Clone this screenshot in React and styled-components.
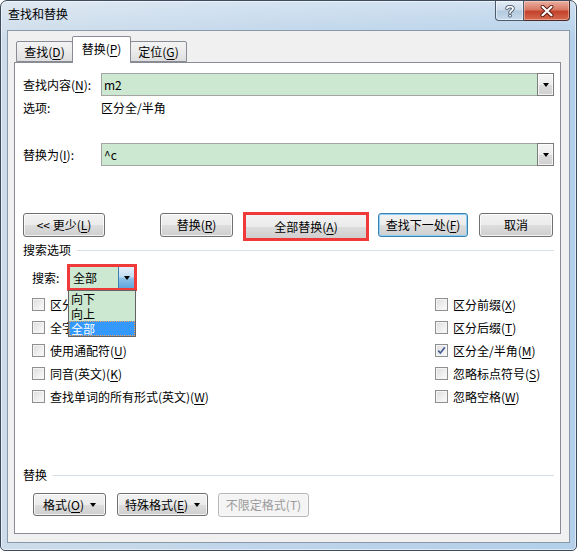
import React from "react";
import styled, { createGlobalStyle } from "styled-components";

const GlobalStyle = createGlobalStyle`
  html, body { margin: 0; padding: 0; background: #ffffff; }
  body {
    font-family: "Noto Sans CJK SC", "Microsoft YaHei", sans-serif;
    font-size: 12px;
    color: #000;
  }
  * { box-sizing: border-box; }
  u { text-underline-offset: 2px; }
`;

const Window = styled.div`
  width: 577px;
  height: 551px;
  border: 1px solid #3d4b5c;
  border-radius: 7px 7px 5px 5px;
  background:
    linear-gradient(180deg, rgba(255,255,255,0.35) 0, rgba(255,255,255,0) 40px),
    linear-gradient(90deg, #cddcea 0%, #bfd5ea 45%, #b3cfe9 100%);
  display: flex;
  flex-direction: column;
  overflow: hidden;
  box-shadow: inset 0 0 0 1px rgba(255,255,255,0.55);
`;

const TitleBar = styled.div`
  height: 29px;
  display: flex;
  align-items: flex-start;
  flex-shrink: 0;
`;

const Title = styled.div`
  padding-left: 7px;
  line-height: 26px;
  font-size: 12px;
  color: #000;
`;

const Caption = styled.div`
  margin-left: auto;
  margin-right: 6px;
  display: flex;
`;

const HelpButton = styled.div`
  width: 29px;
  height: 20px;
  border: 1px solid #4e5b6b;
  border-top: none;
  border-radius: 0 0 0 4px;
  background: linear-gradient(#e3ecf5 0%, #cbdaea 48%, #b4c9de 52%, #c8dbed 100%);
  box-shadow: inset 0 0 0 1px rgba(255,255,255,0.5);
  display: flex;
  align-items: center;
  justify-content: center;
`;

const CloseButton = styled.div`
  width: 46px;
  height: 20px;
  border: 1px solid #4b2a27;
  border-left: none;
  border-top: none;
  border-radius: 0 0 4px 0;
  background: linear-gradient(#eab0a3 0%, #d97a65 45%, #c4432c 55%, #d5694f 100%);
  box-shadow: inset 0 0 0 1px rgba(255,220,210,0.45);
  display: flex;
  align-items: center;
  justify-content: center;
`;

const Client = styled.div`
  flex: 1;
  margin: 0 6px 7px 6px;
  border: 1px solid #8a99a9;
  background: #f0f0f0;
  padding: 5px 8px 8px 6px;
  display: flex;
  flex-direction: column;
  min-height: 0;
`;

const TabRow = styled.div`
  height: 26px;
  display: flex;
  align-items: flex-end;
  padding-left: 2px;
  flex-shrink: 0;
`;

const Tab = styled.div`
  position: relative;
  width: ${(p) => (p.$active ? 59 : 57)}px;
  height: ${(p) => (p.$active ? 27 : 21)}px;
  margin-left: ${(p) => (p.$first ? 0 : -1)}px;
  margin-bottom: ${(p) => (p.$active ? -1 : 0)}px;
  z-index: ${(p) => (p.$active ? 2 : 1)};
  border: 1px solid #898c95;
  border-bottom: ${(p) => (p.$active ? "none" : "1px solid #898c95")};
  border-radius: 2px 2px 0 0;
  background: ${(p) =>
    p.$active ? "#ffffff" : "linear-gradient(#f3f3f3 0%, #ebebeb 50%, #dedede 100%)"};
  display: flex;
  align-items: center;
  justify-content: center;
  padding-bottom: ${(p) => (p.$active ? 2 : 0)}px;
  line-height: 16px;
`;

const Panel = styled.div`
  flex: 1;
  border: 1px solid #898c95;
  background: #ffffff;
  padding: 10px 6px 16px 8px;
  display: flex;
  flex-direction: column;
  min-height: 0;
`;

const FieldRow = styled.div`
  display: flex;
  align-items: center;
  height: 23px;
  margin-top: ${(p) => p.$mt || 0}px;
`;

const FieldLabel = styled.div`
  width: 78px;
  line-height: 16px;
  flex-shrink: 0;
`;

const TextRow = styled.div`
  display: flex;
  line-height: 16px;
  margin-top: ${(p) => p.$mt || 0}px;
`;

const ComboInput = styled.div`
  flex: 1;
  height: 23px;
  border: 1px solid #a5a5a5;
  background: #cde8d0;
  display: flex;
  align-items: center;
  padding-left: 2px;
`;

const ComboValue = styled.div`
  flex: 1;
  line-height: 16px;
`;

const DropButton = styled.div`
  width: 17px;
  height: 23px;
  margin-right: -1px;
  border: 1px solid #7c7c7c;
  background: linear-gradient(#f6f6f6 0%, #ececec 50%, #dcdcdc 51%, #d0d0d0 100%);
  box-shadow: inset 0 0 0 1px rgba(255,255,255,0.7);
  display: flex;
  align-items: center;
  justify-content: center;
`;

const Triangle = styled.span`
  display: inline-block;
  width: 0;
  height: 0;
  border-left: 3.5px solid transparent;
  border-right: 3.5px solid transparent;
  border-top: 4px solid #000;
`;

const ButtonRow = styled.div`
  display: flex;
  align-items: flex-start;
  margin-top: ${(p) => p.$mt || 0}px;
  padding-left: ${(p) => p.$pl || 0}px;
`;

const Button = styled.button`
  width: ${(p) => p.$w}px;
  height: ${(p) => p.$h || 24}px;
  margin-left: ${(p) => p.$ml || 0}px;
  padding: 0;
  font: inherit;
  font-size: 12px;
  line-height: 16px;
  color: ${(p) => (p.disabled ? "#9a9a9a" : "#000")};
  border: 1px solid ${(p) => (p.disabled ? "#b5b8ba" : p.$focus ? "#3c7fb1" : "#707070")};
  border-radius: 3px;
  background: ${(p) =>
    p.disabled
      ? "#f4f4f4"
      : "linear-gradient(#f2f2f2 0%, #ebebeb 50%, #dddddd 51%, #cfcfcf 100%)"};
  box-shadow: inset 0 0 0 1px
    ${(p) => (p.disabled ? "#f8f8f8" : p.$focus ? "#8fd0f5" : "rgba(255,255,255,0.75)")};
  display: flex;
  align-items: center;
  justify-content: center;
  gap: 6px;
  flex-shrink: 0;
`;

const HighlightBox = styled.div`
  width: ${(p) => p.$w}px;
  height: ${(p) => p.$h}px;
  margin-left: ${(p) => p.$ml || 0}px;
  margin-top: -1px;
  margin-bottom: -4px;
  border: 3px solid #f03a3a;
  display: flex;
  flex-shrink: 0;
`;

const InnerButton = styled.div`
  flex: 1;
  line-height: 16px;
  background: linear-gradient(#f2f2f2 0%, #ebebeb 50%, #dddddd 51%, #cfcfcf 100%);
  display: flex;
  align-items: center;
  justify-content: center;
`;

const SectionTitle = styled.div`
  display: flex;
  align-items: center;
  gap: 6px;
  line-height: 16px;
  margin-top: ${(p) => p.$mt || 0}px;
  &::after {
    content: "";
    flex: 1;
    height: 1px;
    margin-top: 1px;
    background: #d5dfe5;
  }
`;

const SearchRow = styled.div`
  display: flex;
  align-items: center;
  margin-top: 6px;
  padding-left: 9px;
  line-height: 16px;
`;

const SearchLabel = styled.div`
  width: 35px;
`;

const SearchCombo = styled.div`
  position: relative;
  width: 70px;
  height: 27px;
  border: 3px solid #f03a3a;
  background: #cde8d0;
  display: flex;
  align-items: center;
`;

const SearchValue = styled.div`
  flex: 1;
  padding-left: 3px;
`;

const BlueArrow = styled.div`
  width: 16px;
  height: 21px;
  border-left: 1px solid #3c7fb1;
  background: linear-gradient(#e4f0fa 0%, #c4def3 45%, #8ec1e9 55%, #5fa6dc 100%);
  display: flex;
  align-items: center;
  justify-content: center;
`;

const DropList = styled.div`
  position: absolute;
  left: -2px;
  top: 23px;
  width: 68px;
  border: 1px solid #646464;
  background: #cde8d0;
  z-index: 5;
`;

const DropItem = styled.div`
  height: 15px;
  line-height: 15px;
  padding-left: 2px;
  color: ${(p) => (p.$selected ? "#fff" : "#000")};
  background: ${(p) => (p.$selected ? "#3399ff" : "transparent")};
  outline: ${(p) => (p.$selected ? "1px dotted #f0a060" : "none")};
  outline-offset: -1px;
`;

const OptionGrid = styled.div`
  display: grid;
  grid-template-columns: 403px 1fr;
  grid-auto-rows: 23px;
  margin-top: 2px;
  padding-left: 9px;
`;

const Option = styled.label`
  display: flex;
  align-items: center;
  gap: 5px;
  line-height: 16px;
  white-space: nowrap;
`;

const CheckBox = styled.span`
  width: 13px;
  height: 13px;
  flex-shrink: 0;
  border: 1px solid #8e8f8f;
  background: linear-gradient(135deg, #dcdcdc 0%, #f0f0f0 60%, #fbfbfb 100%);
  box-shadow: inset 0 0 0 1px #f4f4f4;
  display: flex;
  align-items: center;
  justify-content: center;
`;

const BottomSection = styled.div`
  margin-top: auto;
`;

const ArrowDown = () => <Triangle />;

const CheckMark = () => (
  <svg width="9" height="9" viewBox="0 0 9 9">
    <path d="M1.2 4.6 L3.4 7 L7.8 1.4" fill="none" stroke="#4a5f97" strokeWidth="1.7" />
  </svg>
);

const Check = ({ checked }) => <CheckBox>{checked ? <CheckMark /> : null}</CheckBox>;

const HelpIcon = () => (
  <svg width="12" height="14" viewBox="0 0 12 14">
    <path
      d="M3 4.5 C3 2 9 2 9 4.6 C9 6.6 6 6.6 6 8.8"
      fill="none"
      stroke="#3b4a5c"
      strokeWidth="3.4"
      strokeLinecap="round"
    />
    <circle cx="6" cy="11.8" r="1.8" fill="#3b4a5c" />
    <path
      d="M3 4.5 C3 2 9 2 9 4.6 C9 6.6 6 6.6 6 8.8"
      fill="none"
      stroke="#ffffff"
      strokeWidth="1.8"
      strokeLinecap="round"
    />
    <circle cx="6" cy="11.8" r="1" fill="#ffffff" />
  </svg>
);

const CloseIcon = () => (
  <svg width="14" height="12" viewBox="0 0 14 12">
    <path d="M2.5 1.8 L11.5 10.2 M11.5 1.8 L2.5 10.2" stroke="#5a1e16" strokeWidth="4" strokeLinecap="round" />
    <path d="M2.5 1.8 L11.5 10.2 M11.5 1.8 L2.5 10.2" stroke="#ffffff" strokeWidth="2.2" strokeLinecap="round" />
  </svg>
);

const leftOptions = [
  ["区分大小写(", "H", ")", false],
  ["全字匹配(", "Y", ")", false],
  ["使用通配符(", "U", ")", false],
  ["同音(英文)(", "K", ")", false],
  ["查找单词的所有形式(英文)(", "W", ")", false],
];

const rightOptions = [
  ["区分前缀(", "X", ")", false],
  ["区分后缀(", "T", ")", false],
  ["区分全/半角(", "M", ")", true],
  ["忽略标点符号(", "S", ")", false],
  ["忽略空格(", "W", ")", false],
];

export default function App() {
  const rows = leftOptions.map((l, i) => [l, rightOptions[i]]);
  return (
    <>
      <GlobalStyle />
      <Window>
        <TitleBar>
          <Title>查找和替换</Title>
          <Caption>
            <HelpButton>
              <HelpIcon />
            </HelpButton>
            <CloseButton>
              <CloseIcon />
            </CloseButton>
          </Caption>
        </TitleBar>
        <Client>
          <TabRow>
            <Tab $first>
              查找(<u>D</u>)
            </Tab>
            <Tab $active>
              替换(<u>P</u>)
            </Tab>
            <Tab>
              定位(<u>G</u>)
            </Tab>
          </TabRow>
          <Panel>
            <FieldRow>
              <FieldLabel>
                查找内容(<u>N</u>):
              </FieldLabel>
              <ComboInput>
                <ComboValue>m2</ComboValue>
                <DropButton>
                  <ArrowDown />
                </DropButton>
              </ComboInput>
            </FieldRow>
            <TextRow $mt={4}>
              <FieldLabel>选项:</FieldLabel>
              <div>区分全/半角</div>
            </TextRow>
            <FieldRow $mt={27}>
              <FieldLabel>
                替换为(<u>I</u>):
              </FieldLabel>
              <ComboInput>
                <ComboValue>^c</ComboValue>
                <DropButton>
                  <ArrowDown />
                </DropButton>
              </ComboInput>
            </FieldRow>

            <ButtonRow $mt={47}>
              <Button $w={82}>
                <span>
                  {"<< 更少("}
                  <u>L</u>)
                </span>
              </Button>
              <Button $w={73} $ml={55}>
                <span>
                  替换(<u>R</u>)
                </span>
              </Button>
              <HighlightBox $w={126} $h={29} $ml={10}>
                <InnerButton>
                  <span>
                    全部替换(<u>A</u>)
                  </span>
                </InnerButton>
              </HighlightBox>
              <Button $w={90} $ml={9} $focus>
                <span>
                  查找下一处(<u>F</u>)
                </span>
              </Button>
              <Button $w={74} $ml={11}>
                <span>取消</span>
              </Button>
            </ButtonRow>

            <SectionTitle $mt={5}>搜索选项</SectionTitle>

            <SearchRow>
              <SearchLabel>搜索:</SearchLabel>
              <SearchCombo>
                <SearchValue>全部</SearchValue>
                <BlueArrow>
                  <ArrowDown />
                </BlueArrow>
                <DropList>
                  <DropItem>向下</DropItem>
                  <DropItem>向上</DropItem>
                  <DropItem $selected>全部</DropItem>
                </DropList>
              </SearchCombo>
            </SearchRow>

            <OptionGrid>
              {rows.map(([l, r], i) => (
                <React.Fragment key={i}>
                  <Option>
                    <Check checked={l[3]} />
                    <span>
                      {l[0]}
                      <u>{l[1]}</u>
                      {l[2]}
                    </span>
                  </Option>
                  <Option>
                    <Check checked={r[3]} />
                    <span>
                      {r[0]}
                      <u>{r[1]}</u>
                      {r[2]}
                    </span>
                  </Option>
                </React.Fragment>
              ))}
            </OptionGrid>

            <BottomSection>
              <SectionTitle>替换</SectionTitle>
              <ButtonRow $mt={10} $pl={10}>
                <Button $w={73} $h={23}>
                  <span>
                    格式(<u>O</u>)
                  </span>
                  <ArrowDown />
                </Button>
                <Button $w={91} $h={23} $ml={11}>
                  <span>
                    特殊格式(<u>E</u>)
                  </span>
                  <ArrowDown />
                </Button>
                <Button $w={91} $h={24} $ml={10} disabled>
                  <span>不限定格式(T)</span>
                </Button>
              </ButtonRow>
            </BottomSection>
          </Panel>
        </Client>
      </Window>
    </>
  );
}
